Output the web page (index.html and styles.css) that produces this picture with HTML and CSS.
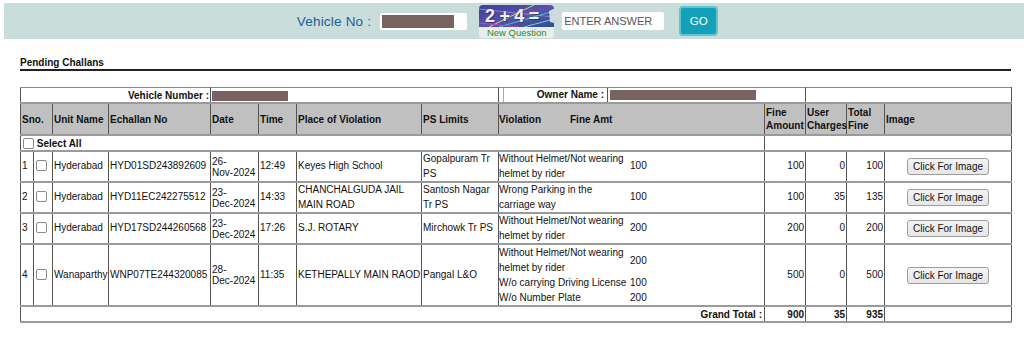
FILE: index.html
```html
<!DOCTYPE html>
<html>
<head>
<meta charset="utf-8">
<title>Pending Challans</title>
<link rel="stylesheet" href="styles.css">
</head>
<body>
<div class="topbar">
  <span class="vlabel">Vehicle No :</span>
  <div class="vinput"><span class="redact redact-vno"></span></div>
  <div class="captcha">
    <svg class="capimg" width="75" height="22" viewBox="0 0 75 22">
      <defs>
        <linearGradient id="cg" x1="0" y1="0" x2="1" y2="1">
          <stop offset="0" stop-color="#3c3f96"/>
          <stop offset="0.5" stop-color="#5a52ab"/>
          <stop offset="1" stop-color="#2f4f8f"/>
        </linearGradient>
      </defs>
      <rect width="75" height="22" fill="url(#cg)"/>
      <line x1="0" y1="4" x2="75" y2="12" stroke="#8a7fd0" stroke-width="1"/>
      <line x1="10" y1="22" x2="55" y2="0" stroke="#d8d36a" stroke-width="1"/>
      <line x1="20" y1="22" x2="75" y2="6" stroke="#39c7d8" stroke-width="1"/>
      <line x1="0" y1="18" x2="40" y2="22" stroke="#c04ac0" stroke-width="1"/>
      <line x1="45" y1="22" x2="75" y2="14" stroke="#6ad0e0" stroke-width="1"/>
      <path d="M70 6 L74 4 L75 4 L75 18 L71 17 Z" fill="#e8e8f2" opacity="0.85"/>
      <text x="7" y="18" font-family="Liberation Sans, Arial, sans-serif" font-size="18" font-weight="bold" fill="#000" opacity="0.35" letter-spacing="-0.3">2 + 4 =</text>
      <text x="6" y="17" font-family="Liberation Sans, Arial, sans-serif" font-size="18" font-weight="bold" fill="#f0f0f8" letter-spacing="-0.3">2 + 4 =</text>
    </svg>
    <div class="newq">New Question</div>
  </div>
  <div class="ans">ENTER ANSWER</div>
  <button class="go">GO</button>
</div>

<div class="section">
  <div class="title">Pending Challans</div>
  <table class="grid">
    <colgroup>
      <col class="c-sno"><col class="c-chk"><col class="c-unit"><col class="c-ech"><col class="c-date"><col class="c-time"><col class="c-place"><col class="c-ps"><col class="c-viol"><col class="c-fine"><col class="c-user"><col class="c-total"><col class="c-img">
    </colgroup>
    <tr class="r-info">
      <td colspan="4" class="lbl">Vehicle Number :</td>
      <td colspan="4" class="val"><span class="redact redact-veh"></span></td>
      <td colspan="2" class="ownercell">
        <div class="owner"><span class="olabel">Owner Name :</span><span class="redact redact-own"></span></div>
      </td>
      <td colspan="3"></td>
    </tr>
    <tr class="r-head">
      <th colspan="2">Sno.</th>
      <th>Unit Name</th>
      <th>Echallan No</th>
      <th>Date</th>
      <th>Time</th>
      <th>Place of Violation</th>
      <th>PS Limits</th>
      <th class="vhead"><div class="vh"><span class="vh-v">Violation</span><span>Fine Amt</span></div></th>
      <th>Fine Amount</th>
      <th>User Charges</th>
      <th>Total Fine</th>
      <th>Image</th>
    </tr>
    <tr class="r-sel">
      <td colspan="9" class="sel"><input type="checkbox" class="cb"> Select All</td>
      <td colspan="4"></td>
    </tr>
    <tr class="r-data">
      <td class="sno">1</td>
      <td class="chk"><input type="checkbox" class="cb"></td>
      <td>Hyderabad</td>
      <td>HYD01SD243892609</td>
      <td class="date">26-<span class="nw">Nov-2024</span></td>
      <td>12:49</td>
      <td>Keyes High School</td>
      <td>Gopalpuram Tr PS</td>
      <td class="viol">
        <table class="vt"><tr><td class="vt-t">Without Helmet/Not wearing helmet by rider</td><td class="vt-a">100</td></tr></table>
      </td>
      <td class="num">100</td>
      <td class="num">0</td>
      <td class="num">100</td>
      <td class="img"><button class="imgbtn">Click For Image</button></td>
    </tr>
    <tr class="r-data">
      <td class="sno">2</td>
      <td class="chk"><input type="checkbox" class="cb"></td>
      <td>Hyderabad</td>
      <td>HYD11EC242275512</td>
      <td class="date">23-<span class="nw">Dec-2024</span></td>
      <td>14:33</td>
      <td>CHANCHALGUDA JAIL MAIN ROAD</td>
      <td>Santosh Nagar Tr PS</td>
      <td class="viol">
        <table class="vt"><tr><td class="vt-t">Wrong Parking in the carriage way</td><td class="vt-a">100</td></tr></table>
      </td>
      <td class="num">100</td>
      <td class="num">35</td>
      <td class="num">135</td>
      <td class="img"><button class="imgbtn">Click For Image</button></td>
    </tr>
    <tr class="r-data">
      <td class="sno">3</td>
      <td class="chk"><input type="checkbox" class="cb"></td>
      <td>Hyderabad</td>
      <td>HYD17SD244260568</td>
      <td class="date">23-<span class="nw">Dec-2024</span></td>
      <td>17:26</td>
      <td>S.J. ROTARY</td>
      <td>Mirchowk Tr PS</td>
      <td class="viol">
        <table class="vt"><tr><td class="vt-t">Without Helmet/Not wearing helmet by rider</td><td class="vt-a">200</td></tr></table>
      </td>
      <td class="num">200</td>
      <td class="num">0</td>
      <td class="num">200</td>
      <td class="img"><button class="imgbtn">Click For Image</button></td>
    </tr>
    <tr class="r-data r-tall">
      <td class="sno">4</td>
      <td class="chk"><input type="checkbox" class="cb"></td>
      <td>Wanaparthy</td>
      <td>WNP07TE244320085</td>
      <td class="date">28-<span class="nw">Dec-2024</span></td>
      <td>11:35</td>
      <td class="nowrap">KETHEPALLY MAIN RAOD</td>
      <td>Pangal L&amp;O</td>
      <td class="viol">
        <table class="vt">
          <tr><td class="vt-t">Without Helmet/Not wearing helmet by rider</td><td class="vt-a">200</td></tr>
          <tr><td class="vt-t">W/o carrying Driving License</td><td class="vt-a">100</td></tr>
          <tr><td class="vt-t">W/o Number Plate</td><td class="vt-a">200</td></tr>
        </table>
      </td>
      <td class="num">500</td>
      <td class="num">0</td>
      <td class="num">500</td>
      <td class="img"><button class="imgbtn">Click For Image</button></td>
    </tr>
    <tr class="r-total">
      <td colspan="9" class="gt">Grand Total :</td>
      <td class="num b">900</td>
      <td class="num b">35</td>
      <td class="num b">935</td>
      <td></td>
    </tr>
  </table>
</div>
</body>
</html>
```

FILE: styles.css
```css
html, body {
  margin: 0;
  padding: 0;
  background: #ffffff;
  font-family: "Liberation Sans", Arial, sans-serif;
  color: #111;
}

/* ---------- top search bar ---------- */
.topbar {
  margin: 3px 0 0 4px;
  height: 36px;
  background: #c9dedb;
  display: flex;
  align-items: center;
  justify-content: center;
  padding-right: 13px;
}
.vlabel {
  color: #1d5c9c;
  font-size: 13.5px;
  margin-right: 9px;
  letter-spacing: 0.2px;
}
.vinput {
  width: 87px;
  height: 17px;
  background: #fff;
  border-radius: 2px;
  display: flex;
  align-items: center;
  padding-left: 2px;
  box-sizing: border-box;
  margin-right: 12px;
}
.redact {
  display: inline-block;
  background: #786262;
}
.redact-vno { width: 72px; height: 13px; }
.captcha {
  width: 75px;
  height: 33px;
  margin-right: 8px;
  border-radius: 4px;
  overflow: hidden;
  background: #e9eeec;
  display: flex;
  flex-direction: column;
}
.capimg { display: block; }
.newq {
  font-size: 9.5px;
  color: #1f8f22;
  text-align: center;
  line-height: 11px;
}
.ans {
  width: 102px;
  height: 18px;
  box-sizing: border-box;
  background: #fff;
  border-radius: 2px;
  font-size: 11px;
  color: #555;
  padding-left: 2px;
  margin-right: 15px;
  display: flex;
  align-items: center;
}
.go {
  width: 39px;
  height: 30px;
  background: #12a1b8;
  border: 2px solid #62c3d1;
  border-radius: 4px;
  color: #fff;
  font-family: "Liberation Sans", Arial, sans-serif;
  font-size: 11.5px;
  padding: 0;
}

/* ---------- section ---------- */
.section {
  margin: 0 13px 0 20px;
}
.title {
  margin-top: 18px;
  font-size: 10px;
  font-weight: bold;
  line-height: 12px;
  border-bottom: 2px solid #222;
}

/* ---------- grid ---------- */
.grid {
  margin-top: 16px;
  width: 991px;
  table-layout: fixed;
  border-collapse: collapse;
  font-size: 10px;
  border: 1px solid #8c8c8c;
}
.c-sno { width: 13px; }
.c-chk { width: 19px; }
.c-unit { width: 56px; }
.c-ech { width: 102px; }
.c-date { width: 48px; }
.c-time { width: 38px; }
.c-place { width: 125px; }
.c-ps { width: 77px; }
.c-viol { width: 266px; }
.c-fine { width: 41px; }
.c-user { width: 41px; }
.c-total { width: 38px; }
.c-img { width: 127px; }

.grid td, .grid th {
  border-left: 1px solid #555;
  border-right: 1px solid #555;
  border-top: 2px solid #9a9a9a;
  border-bottom: 2px solid #9a9a9a;
  padding: 0 1px;
  vertical-align: middle;
  text-align: left;
  line-height: 13px;
}
.grid th {
  background: #c0c0c0;
  font-weight: bold;
}
.r-info { height: 14px; }
.r-info td { border-top: 1px solid #8c8c8c; }
.lbl {
  text-align: right !important;
  font-weight: bold;
  padding-right: 1px;
}
.val { padding-left: 1px; }
.redact-veh { width: 76px; height: 10px; vertical-align: middle; }
.ownercell { padding: 0 0 0 4px !important; }
.owner {
  display: flex;
  align-items: center;
  height: 14px;
}
.olabel {
  width: 105px;
  text-align: right;
  font-weight: bold;
  box-sizing: border-box;
  padding-right: 3px;
  border-left: 1px solid #aaa;
  border-right: 1px solid #555;
  height: 14px;
  line-height: 14px;
}
.redact-own { width: 146px; height: 10px; margin-left: 2px; }

.r-head { height: 32px; }
.vhead { padding: 0 !important; }
.vh { display: flex; }
.vh-v { width: 71px; }

.r-sel { height: 16px; }
.sel { font-weight: bold; padding-left: 2px !important; }
.cb {
  appearance: none;
  -webkit-appearance: none;
  width: 11px;
  height: 11px;
  margin: 0;
  border: 1px solid #8a8a8a;
  border-radius: 2px;
  background: #fff;
  vertical-align: -2px;
  box-sizing: border-box;
}
.chk { padding-left: 2px !important; }

.r-data td { line-height: 14.5px; }
.r-data .date { line-height: 11px; }
.nw { white-space: nowrap; }
.nowrap { white-space: nowrap; }
.r-tall { height: 62px; }
.viol { padding: 0 !important; }
.vt {
  border-collapse: collapse;
  width: 100%;
}
.vt td {
  border: none !important;
  padding: 0 !important;
  line-height: 15px;
  vertical-align: middle;
}
.r-data .vt td { line-height: 14.5px; }
.r-tall .vt td { line-height: 15px; }
.vt-t { width: 131px; }
.num { text-align: right !important; padding-right: 1px; }
.b { font-weight: bold; }
.img { text-align: center !important; }
.imgbtn {
  font-family: "Liberation Sans", Arial, sans-serif;
  font-size: 10px;
  height: 17px;
  padding: 0 5px;
  background: linear-gradient(#f4f4f4, #e6e6e6);
  border: 1px solid #9d9d9d;
  border-radius: 3px;
  color: #111;
}
.r-total { height: 16px; }
.gt { text-align: right !important; font-weight: bold; padding-right: 2px !important; }
```
